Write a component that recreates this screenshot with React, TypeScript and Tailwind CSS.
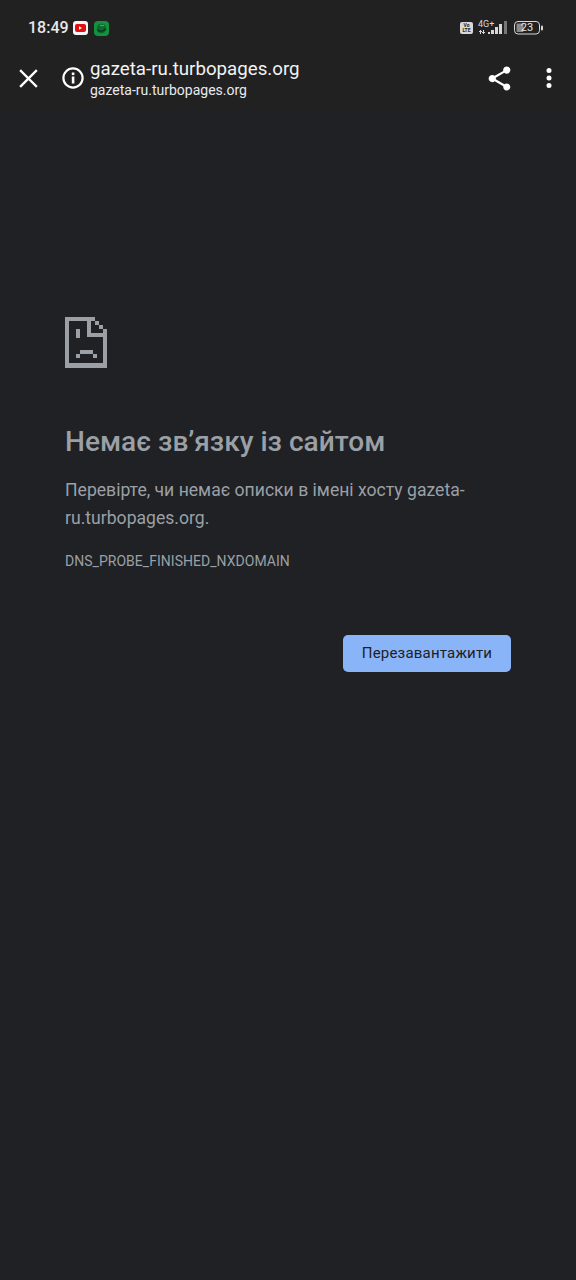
import React from "react";

function SadPage() {
  return (
    <svg width="42" height="51" viewBox="0 0 42 51" fill="#9aa0a6" shapeRendering="crispEdges">
      <path d="M0 0H30V4H4V46H38V12H42V51H0Z" />
      <path d="M30 4H34V8H30ZM34 8H38V12H34Z" />
      <path d="M22 4H26V16H38V20H22Z" />
      <path d="M11 12H15V21H11Z" />
      <path d="M11 37H15V41H11ZM15 33H28V37H15ZM28 37H32V41H28Z" />
    </svg>
  );
}

export default function App() {
  return (
    <div className="w-[576px] h-[1280px] bg-[#202124] font-['Roboto',sans-serif] flex flex-col overflow-hidden">
      <div className="h-[110px] bg-[#212122] shrink-0 flex flex-col">
        <div className="h-[48px] flex items-center justify-between pl-[28px] pr-[33px] pt-[8px]">
          <div className="flex items-center">
            <span className="text-[16px] text-[#e8e8e8] font-medium leading-none">18:49</span>
            <svg className="ml-[4px]" width="15" height="14" viewBox="0 0 15 14">
              <rect width="15" height="14" rx="3" fill="#f5f5f5" />
              <rect x="2" y="3" width="11" height="8" rx="2" fill="#e01010" />
              <path d="M6 5.2v3.6L9 7z" fill="#fff" />
            </svg>
            <svg className="ml-[6px]" width="15" height="15" viewBox="0 0 15 15">
              <rect width="15" height="15" rx="4" fill="#12923f" />
              <circle cx="7.5" cy="7.5" r="4.8" fill="#0f6a30" />
              <path d="M3.5 8.5c1.5 2.8 6 2.8 8-1" stroke="#0b3d20" strokeWidth="1.8" fill="none" />
              <path d="M6 4.5h4" stroke="#27b85c" strokeWidth="1.2" fill="none" />
            </svg>
          </div>
          <div className="flex items-center">
            <div className="w-[13px] h-[12px] rounded-[2px] bg-[#d8d8d8] flex flex-col items-center justify-center text-[#212122] text-[5px] leading-[5px] font-bold">
              <span>Vo</span>
              <span>LTE</span>
            </div>
            <div className="relative ml-[5px] w-[30px] h-[14px]">
              <span className="absolute left-0 -top-[1px] text-[9px] leading-[8px] text-[#d8d8d8]">4G+</span>
              <svg width="30" height="14" viewBox="0 0 30 14" fill="#d8d8d8">
                <path d="M2 9h1v4H2zM1 10h3v1H1zM5 9h1v4H5zM4 11h3v1H4z" />
                <rect x="10" y="11" width="2" height="2" />
                <rect x="13" y="9" width="3" height="4" />
                <rect x="17" y="6" width="3" height="7" />
                <rect x="21" y="3" width="3" height="10" />
                <rect x="26" y="0" width="3" height="13" fill="#777" />
              </svg>
            </div>
            <div className="relative ml-[6px] w-[29px] h-[14px]">
              <svg width="29" height="14" viewBox="0 0 29 14">
                <rect x="0.5" y="0.5" width="25" height="12.5" rx="3.5" fill="none" stroke="#d8d8d8" />
                <rect x="2.5" y="2.5" width="7" height="8.5" rx="1" fill="#8a8a8a" />
                <rect x="27" y="4.5" width="2" height="5" rx="1" fill="#d8d8d8" />
              </svg>
              <span className="absolute left-0 top-0 w-[26px] h-[14px] text-center text-[11px] leading-[14px] text-[#e8e8e8]">23</span>
            </div>
          </div>
        </div>
        <div className="flex-1 flex items-center pl-[18px] pr-[24px] pb-[2px]">
          <svg width="21" height="21" viewBox="0 0 21 21" stroke="#fff" strokeWidth="2.4" strokeLinecap="square">
            <path d="M3 3l15 15M18 3L3 18" />
          </svg>
          <svg className="ml-[22px]" width="24" height="24" viewBox="0 0 24 24" fill="none">
            <circle cx="12" cy="12" r="9.6" stroke="#fff" strokeWidth="2.2" />
            <rect x="10.8" y="10.5" width="2.6" height="7" fill="#fff" />
            <rect x="10.8" y="6.5" width="2.6" height="2.6" fill="#fff" />
          </svg>
          <div className="ml-[5px] flex flex-col mt-[1px]">
            <span className="text-[18.7px] leading-[22px] text-[#f1f3f4]">gazeta-ru.turbopages.org</span>
            <span className="text-[14px] leading-[20px] text-[#e8eaed]">gazeta-ru.turbopages.org</span>
          </div>
          <div className="ml-auto flex items-center">
            <svg width="29" height="29" viewBox="0 0 24 24" fill="#fff">
              <path d="M18 16.08c-.76 0-1.44.3-1.96.77L8.91 12.7c.05-.23.09-.46.09-.7s-.04-.47-.09-.7l7.05-4.11c.54.5 1.25.81 2.04.81 1.66 0 3-1.34 3-3s-1.34-3-3-3-3 1.34-3 3c0 .24.04.47.09.7L8.04 9.81C7.5 9.31 6.79 9 6 9c-1.66 0-3 1.34-3 3s1.34 3 3 3c.79 0 1.5-.31 2.04-.81l7.12 4.16c-.05.21-.08.43-.08.65 0 1.61 1.31 2.92 2.92 2.92s2.92-1.31 2.92-2.92-1.31-2.92-2.92-2.92z" />
            </svg>
            <svg className="ml-[32px]" width="6" height="20" viewBox="0 0 6 20" fill="#fff">
              <circle cx="3" cy="2.6" r="2.5" />
              <circle cx="3" cy="10" r="2.5" />
              <circle cx="3" cy="17.4" r="2.5" />
            </svg>
          </div>
        </div>
      </div>
      <div className="pl-[65px] pr-[65px] pt-[207px] flex flex-col">
        <SadPage />
        <h1 className="mt-[56px] text-[28.1px] leading-[36px] font-medium text-[#9aa0a6]">Немає зв’язку із сайтом</h1>
        <p className="mt-[16px] text-[17.6px] leading-[28px] text-[#9aa0a6] w-[420px]">
          Перевірте, чи немає описки в імені хосту gazeta-ru.turbopages.org.
        </p>
        <p className="mt-[19px] text-[14px] leading-[20px] tracking-[0.03px] text-[#9aa0a6]">DNS_PROBE_FINISHED_NXDOMAIN</p>
        <div className="mt-[64px] flex justify-end">
          <button className="w-[168px] h-[37px] rounded-[5px] bg-[#8ab4f8] text-[#202124] text-[15px] tracking-[0.2px]">
            Перезавантажити
          </button>
        </div>
      </div>
    </div>
  );
}
